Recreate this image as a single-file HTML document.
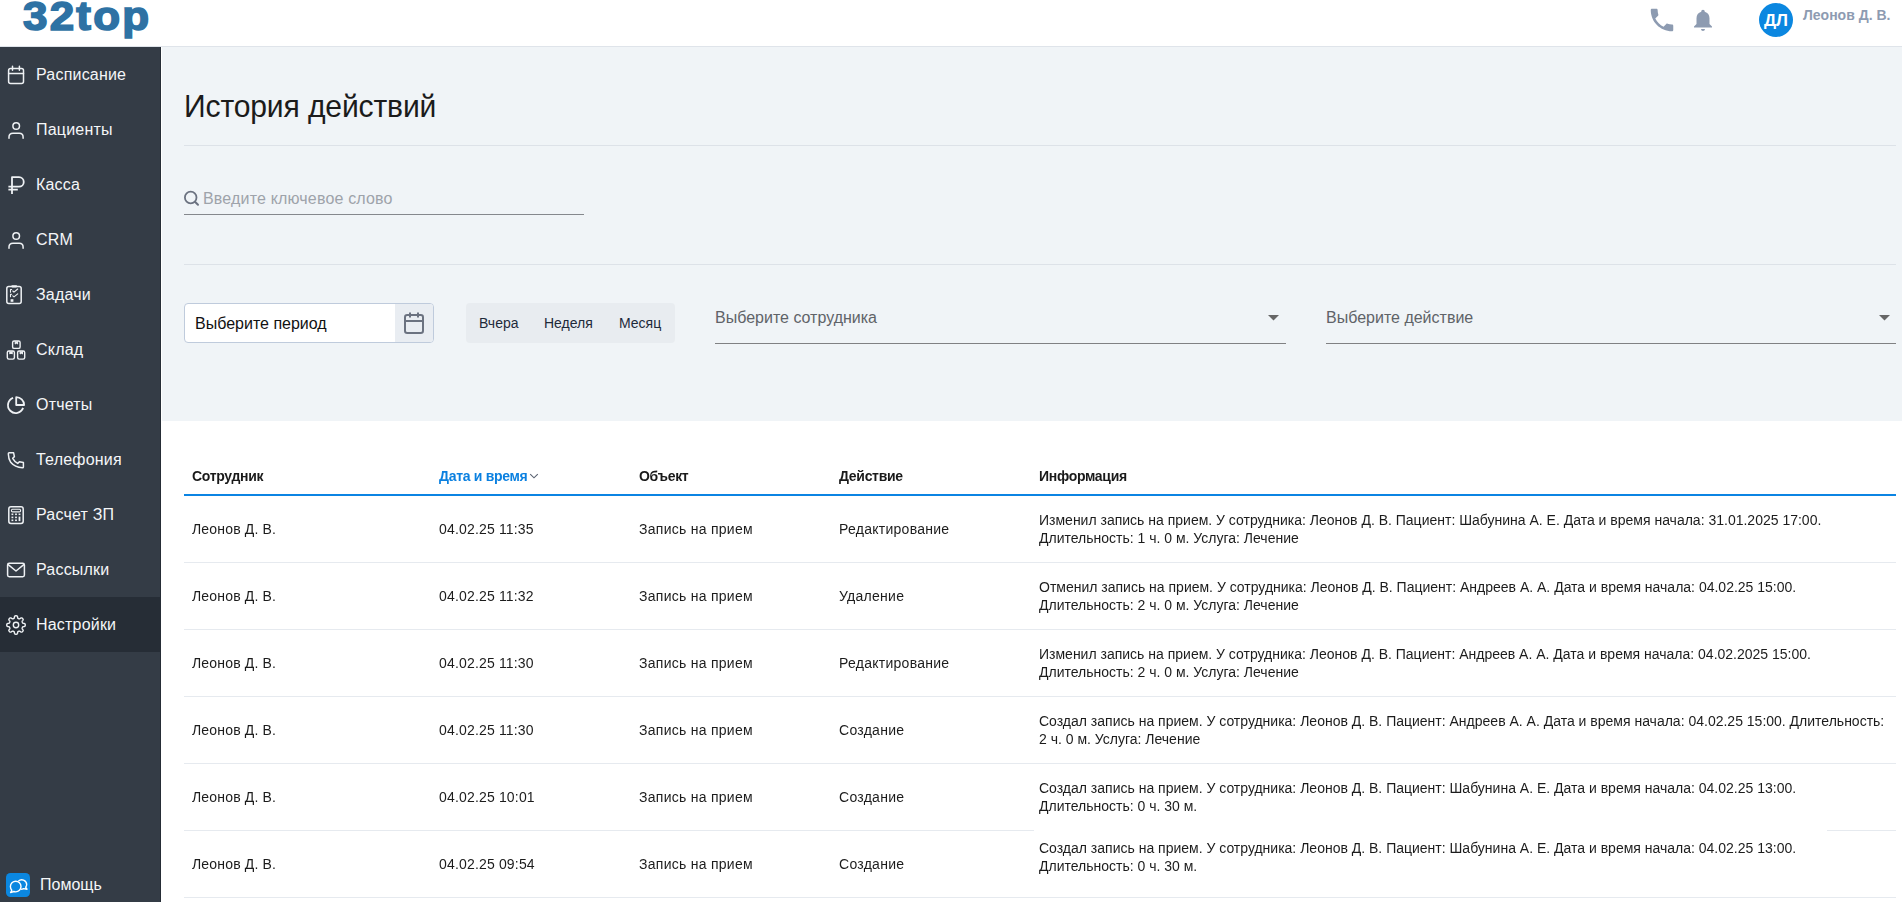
<!DOCTYPE html>
<html><head><meta charset="utf-8">
<style>
*{box-sizing:border-box;margin:0;padding:0}
html,body{width:1902px;height:902px;overflow:hidden;background:#fff;font-family:"Liberation Sans",sans-serif;color:#222}
#tbl{position:absolute;left:0;top:0;width:1902px;height:902px;will-change:transform}
.a{position:absolute;white-space:nowrap}
#hdr{position:absolute;left:0;top:0;width:1902px;height:47px;background:#fff;border-bottom:1px solid #dfe4ea}
#logo{position:absolute;left:23px;top:-5px;font-weight:bold;font-size:40px;line-height:42px;color:#2e72a4;letter-spacing:2px;-webkit-text-stroke:1.6px #2e72a4;transform-origin:0 0;transform:scaleX(1.1)}
#side{position:absolute;left:0;top:47px;width:161px;height:855px;background:#343c46;border-right:1px solid #262d36}
.mi{position:absolute;left:0;width:160px;height:55px;line-height:55px;color:#f4f6f8;font-size:16px;letter-spacing:0.2px}
.mi span{position:absolute;left:36px;top:0}
.mi svg{position:absolute;left:0;top:0}
.mi.act{background:#262d36}
#main{position:absolute;left:162px;top:47px;width:1740px;height:374px;background:#f0f4f7}
#title{position:absolute;left:184px;top:88px;font-size:32px;line-height:36px;letter-spacing:-0.15px;transform-origin:0 0;transform:scaleX(0.94);color:#1b1b1b}
.hl{position:absolute;height:1px;background:#dde2e8}
.t14{font-size:14px;line-height:18px;color:#1c1c1c}
.th{font-size:14px;line-height:18px;font-weight:bold;color:#1a1a1a;letter-spacing:-0.3px}
.rb{position:absolute;left:184px;width:1712px;height:1px;background:#e6eaef}
</style></head>
<body>
<div id="hdr"><div id="logo">32top</div>
  <!-- phone -->
  <svg class="a" style="left:1647px;top:5px" width="30" height="30" viewBox="0 0 24 24"><path fill="#8d9bb1" d="M6.62 10.79c1.44 2.83 3.76 5.14 6.59 6.59l2.2-2.2c.27-.27.67-.36 1.02-.24 1.12.37 2.33.57 3.57.57.55 0 1 .45 1 1V20c0 .55-.45 1-1 1-9.39 0-17-7.61-17-17 0-.55.45-1 1-1h3.5c.55 0 1 .45 1 1 0 1.25.2 2.45.57 3.57.11.35.03.74-.25 1.02l-2.2 2.2z" transform="rotate(0 12 12)"/></svg>
  <!-- bell -->
  <svg class="a" style="left:1690.4px;top:6px" width="26" height="28.2" viewBox="0 0 24 26"><path fill="#8d9bb1" d="M12 3.5c.9 0 1.6.7 1.6 1.5v.4c2.8.7 4.4 3.1 4.4 6v5.2l2.3 2.3v.9H3.7v-.9L6 16.6v-5.2c0-2.9 1.6-5.3 4.4-6V5c0-.8.7-1.5 1.6-1.5zM10.2 21.2h3.6c0 1-.8 1.8-1.8 1.8s-1.8-.8-1.8-1.8z"/></svg>
  <div class="a" style="left:1759px;top:3px;width:34px;height:34px;border-radius:50%;background:#0b87e0;color:#fff;font-weight:bold;font-size:17px;line-height:36px;text-align:center">ДЛ</div>
  <div class="a" style="left:1803px;top:6px;font-size:14px;line-height:18px;font-weight:bold;color:#8d9bb1">Леонов Д. В.</div>
</div>
<div id="side">
  <div class="mi" style="top:0"><span>Расписание</span></div>
  <div class="mi" style="top:55px"><span>Пациенты</span></div>
  <div class="mi" style="top:110px"><span>Касса</span></div>
  <div class="mi" style="top:165px"><span>CRM</span></div>
  <div class="mi" style="top:220px"><span>Задачи</span></div>
  <div class="mi" style="top:275px"><span>Склад</span></div>
  <div class="mi" style="top:330px"><span>Отчеты</span></div>
  <div class="mi" style="top:385px"><span>Телефония</span></div>
  <div class="mi" style="top:440px"><span>Расчет ЗП</span></div>
  <div class="mi" style="top:495px"><span>Рассылки</span></div>
  <div class="mi act" style="top:550px"><span>Настройки</span></div>
  <div class="a" style="left:40px;top:826px;font-size:16px;line-height:24px;color:#f4f6f8">Помощь</div>
</div>
<div id="main"></div>
<svg class="a" style="left:0;top:0" width="161" height="902" viewBox="0 0 161 902">
<g fill="none" stroke="#eef1f4" stroke-width="1.5" stroke-linecap="round" stroke-linejoin="round">
<!-- calendar -->
<rect x="8.6" y="68.4" width="14.9" height="15.1" rx="2"/>
<path d="M8.6 73.4H23.5M12.5 66.3V70.3M19.4 66.3V70.3"/>
<!-- person -->
<circle cx="16.2" cy="126" r="3.3"/>
<path d="M9 138.2V137Q9 133.2 13 133.2H19.3Q23.1 133.2 23.1 137V138.2"/>
<!-- ruble -->
<path d="M12 194V177.2H19A4.75 4.75 0 0 1 19 186.7H8.4M8.4 189.6H17.8" stroke-width="1.8" stroke-linecap="butt"/>
<!-- crm person -->
<circle cx="16.2" cy="236" r="3.3"/>
<path d="M9 248.2V247Q9 243.2 13 243.2H19.3Q23.1 243.2 23.1 247V248.2"/>
<!-- clipboard -->
<rect x="6.8" y="286.4" width="14.4" height="17" rx="2"/>
<path d="M12.3 286.3H16.1" stroke-width="2.2"/>
<path d="M11.6 289.5H10.5V292.2M12.8 291L14 292.2L17.7 289M11.6 294.2H10.5V296.8M12.8 295.8L14 296.9L17.7 293.8" stroke-width="1.1"/>
<rect x="10.6" y="299.2" width="2.8" height="2.6" fill="#eef1f4" stroke="none"/>
<!-- boxes -->
<rect x="12.6" y="341" width="7.5" height="7.4" rx="1.5" stroke-width="1.4"/>
<rect x="7.3" y="351" width="7.1" height="8.1" rx="1.5" stroke-width="1.4"/>
<rect x="17.6" y="351" width="7.1" height="8.1" rx="1.5" stroke-width="1.4"/>
<path d="M15.2 341.5V344L16.4 343.2L17.6 344V341.5M9.8 351.5V354L11 353.2L12.2 354V351.5M20.1 351.5V354L21.3 353.2L22.5 354V351.5" stroke-width="1" fill="#eef1f4"/>
<!-- pie -->
<path d="M13.1 397.9A7.8 7.8 0 1 0 23.1 407.9" stroke-width="1.8" stroke-linecap="butt"/>
<path d="M16.2 397.2V405H24.1A7.9 7.9 0 0 0 16.2 397.2Z" stroke-width="1.8"/>
<!-- phone -->
<path d="M9.2 452.8H13.6L14.4 456.6L12.7 458.3Q14.5 461.6 17.7 463.4L19.4 461.7L23.4 462.6V466.9Q23.4 467.7 22.5 467.7Q14.8 467.4 10.7 462.3Q8.4 458.8 8.3 453.7Q8.3 452.8 9.2 452.8Z"/>
<!-- calculator -->
<rect x="8.8" y="506.8" width="14.4" height="16.6" rx="2.2"/>
<rect x="11.4" y="509.3" width="9.2" height="2.6" rx="1.2" stroke-width="1.1"/>
<g fill="#eef1f4" stroke="none">
<rect x="11.5" y="513.5" width="1.8" height="1.6"/><rect x="15.1" y="513.5" width="1.8" height="1.6"/><rect x="18.6" y="513.5" width="1.8" height="1.6"/>
<rect x="11.5" y="516.6" width="1.8" height="1.6"/><rect x="15.1" y="516.6" width="1.8" height="1.6"/><rect x="18.6" y="516.6" width="1.8" height="4.5"/>
<rect x="11.5" y="519.5" width="1.8" height="1.6"/><rect x="15.1" y="519.5" width="1.8" height="1.6"/>
</g>
<!-- mail -->
<rect x="7.6" y="563.3" width="16.8" height="13.4" rx="1.6"/>
<path d="M8.2 564.6L16 571L23.8 564.6"/>
<!-- gear -->
<path d="M25.25 625.00 L25.24 625.24 L25.22 625.48 L25.18 625.72 L25.11 625.96 L24.96 626.18 L24.67 626.37 L24.19 626.52 L23.60 626.62 L23.12 626.71 L22.82 626.83 L22.66 626.97 L22.55 627.13 L22.47 627.29 L22.40 627.46 L22.33 627.62 L22.26 627.79 L22.19 627.95 L22.14 628.13 L22.10 628.31 L22.12 628.53 L22.24 628.83 L22.52 629.23 L22.86 629.72 L23.10 630.16 L23.17 630.50 L23.12 630.76 L23.00 630.98 L22.86 631.18 L22.71 631.37 L22.54 631.54 L22.37 631.71 L22.18 631.86 L21.98 632.00 L21.76 632.12 L21.50 632.17 L21.16 632.10 L20.72 631.86 L20.23 631.52 L19.83 631.24 L19.53 631.12 L19.31 631.10 L19.13 631.14 L18.95 631.19 L18.79 631.26 L18.62 631.33 L18.46 631.40 L18.29 631.47 L18.13 631.55 L17.97 631.66 L17.83 631.82 L17.71 632.12 L17.62 632.60 L17.52 633.19 L17.37 633.67 L17.18 633.96 L16.96 634.11 L16.72 634.18 L16.48 634.22 L16.24 634.24 L16.00 634.25 L15.76 634.24 L15.52 634.22 L15.28 634.18 L15.04 634.11 L14.82 633.96 L14.63 633.67 L14.48 633.19 L14.38 632.60 L14.29 632.12 L14.17 631.82 L14.03 631.66 L13.87 631.55 L13.71 631.47 L13.54 631.40 L13.38 631.33 L13.21 631.26 L13.05 631.19 L12.87 631.14 L12.69 631.10 L12.47 631.12 L12.17 631.24 L11.77 631.52 L11.28 631.86 L10.84 632.10 L10.50 632.17 L10.24 632.12 L10.02 632.00 L9.82 631.86 L9.63 631.71 L9.46 631.54 L9.29 631.37 L9.14 631.18 L9.00 630.98 L8.88 630.76 L8.83 630.50 L8.90 630.16 L9.14 629.72 L9.48 629.23 L9.76 628.83 L9.88 628.53 L9.90 628.31 L9.86 628.13 L9.81 627.95 L9.74 627.79 L9.67 627.62 L9.60 627.46 L9.53 627.29 L9.45 627.13 L9.34 626.97 L9.18 626.83 L8.88 626.71 L8.40 626.62 L7.81 626.52 L7.33 626.37 L7.04 626.18 L6.89 625.96 L6.82 625.72 L6.78 625.48 L6.76 625.24 L6.75 625.00 L6.76 624.76 L6.78 624.52 L6.82 624.28 L6.89 624.04 L7.04 623.82 L7.33 623.63 L7.81 623.48 L8.40 623.38 L8.88 623.29 L9.18 623.17 L9.34 623.03 L9.45 622.87 L9.53 622.71 L9.60 622.54 L9.67 622.38 L9.74 622.21 L9.81 622.05 L9.86 621.87 L9.90 621.69 L9.88 621.47 L9.76 621.17 L9.48 620.77 L9.14 620.28 L8.90 619.84 L8.83 619.50 L8.88 619.24 L9.00 619.02 L9.14 618.82 L9.29 618.63 L9.46 618.46 L9.63 618.29 L9.82 618.14 L10.02 618.00 L10.24 617.88 L10.50 617.83 L10.84 617.90 L11.28 618.14 L11.77 618.48 L12.17 618.76 L12.47 618.88 L12.69 618.90 L12.87 618.86 L13.05 618.81 L13.21 618.74 L13.38 618.67 L13.54 618.60 L13.71 618.53 L13.87 618.45 L14.03 618.34 L14.17 618.18 L14.29 617.88 L14.38 617.40 L14.48 616.81 L14.63 616.33 L14.82 616.04 L15.04 615.89 L15.28 615.82 L15.52 615.78 L15.76 615.76 L16.00 615.75 L16.24 615.76 L16.48 615.78 L16.72 615.82 L16.96 615.89 L17.18 616.04 L17.37 616.33 L17.52 616.81 L17.62 617.40 L17.71 617.88 L17.83 618.18 L17.97 618.34 L18.13 618.45 L18.29 618.53 L18.46 618.60 L18.62 618.67 L18.79 618.74 L18.95 618.81 L19.13 618.86 L19.31 618.90 L19.53 618.88 L19.83 618.76 L20.23 618.48 L20.72 618.14 L21.16 617.90 L21.50 617.83 L21.76 617.88 L21.98 618.00 L22.18 618.14 L22.37 618.29 L22.54 618.46 L22.71 618.63 L22.86 618.82 L23.00 619.02 L23.12 619.24 L23.17 619.50 L23.10 619.84 L22.86 620.28 L22.52 620.77 L22.24 621.17 L22.12 621.47 L22.10 621.69 L22.14 621.87 L22.19 622.05 L22.26 622.21 L22.33 622.38 L22.40 622.54 L22.47 622.71 L22.55 622.87 L22.66 623.03 L22.82 623.17 L23.12 623.29 L23.60 623.38 L24.19 623.48 L24.67 623.63 L24.96 623.82 L25.11 624.04 L25.18 624.28 L25.22 624.52 L25.24 624.76Z" stroke-width="1.4"/>
<circle cx="16" cy="625" r="2.7" stroke-width="1.4"/>
</g>
<!-- help -->
<rect x="6" y="873" width="24" height="24" rx="4.5" fill="#0b87e0"/>
<g fill="none" stroke="#fff" stroke-width="1.4" stroke-linejoin="round">
<path d="M18.3 881.3A4.9 4.9 0 0 1 26.7 884.5Q26.6 886.3 25.6 887.2L27 889.2L23.6 888.6Q22.4 889.3 20.9 889.4"/>
<path d="M10.6 892.6L11.8 890.3Q10.4 888.7 10.4 886.6A5.3 5.3 0 1 1 15.7 891.9Q14.6 891.9 13.8 891.5Z"/>
</g>
</svg>
<div id="title">История действий</div>
<div class="hl" style="left:184px;top:145px;width:1712px"></div>

<!-- search -->
<svg class="a" style="left:183px;top:190px" width="17" height="17" viewBox="0 0 17 17"><circle cx="7.7" cy="7.5" r="5.8" fill="none" stroke="#6b7280" stroke-width="1.8"/><path d="M12.2 12l2.8 2.8" stroke="#6b7280" stroke-width="2" stroke-linecap="round"/></svg>
<div class="a" style="left:203px;top:190px;font-size:16px;line-height:18px;color:#9ea3aa;letter-spacing:0.17px">Введите ключевое слово</div>
<div class="a" style="left:184px;top:214px;width:400px;height:1px;background:#85888d"></div>
<div class="hl" style="left:184px;top:264px;width:1712px"></div>

<!-- period -->
<div class="a" style="left:184px;top:303px;width:250px;height:40px;border:1px solid #bfcbdc;border-radius:4px;background:#fff;overflow:hidden">
  <div class="a" style="left:210px;top:0;width:39px;height:38px;background:#e9edf2"></div>
  <svg class="a" style="left:218px;top:7px" width="22" height="24" viewBox="0 0 22 24"><rect x="2" y="4" width="18" height="18" rx="2.2" fill="none" stroke="#6b7280" stroke-width="2"/><path d="M2 10h18M7 1.5v5M15 1.5v5" stroke="#6b7280" stroke-width="2"/></svg>
  <div class="a" style="left:10px;top:11px;font-size:16px;line-height:18px;color:#111">Выберите период</div>
</div>
<div class="a" style="left:466px;top:303px;width:209px;height:40px;border-radius:4px;background:#e8ecf0">
  <div class="a" style="left:13px;top:11px;font-size:14px;line-height:18px;color:#1e2a3a">Вчера</div>
  <div class="a" style="left:78px;top:11px;font-size:14px;line-height:18px;color:#1e2a3a">Неделя</div>
  <div class="a" style="left:153px;top:11px;font-size:14px;line-height:18px;color:#1e2a3a">Месяц</div>
</div>
<div class="a" style="left:715px;top:309px;font-size:16px;line-height:18px;color:#5f6368">Выберите сотрудника</div>
<svg class="a" style="left:1268px;top:315px" width="11" height="6" viewBox="0 0 11 6"><path d="M0 0h11L5.5 5.5z" fill="#666"/></svg>
<div class="a" style="left:715px;top:343px;width:571px;height:1px;background:#808183"></div>
<div class="a" style="left:1326px;top:309px;font-size:16px;line-height:18px;color:#5f6368">Выберите действие</div>
<svg class="a" style="left:1879px;top:315px" width="11" height="6" viewBox="0 0 11 6"><path d="M0 0h11L5.5 5.5z" fill="#666"/></svg>
<div class="a" style="left:1326px;top:343px;width:570px;height:1px;background:#808183"></div>

<div id="tbl">
<!-- table -->
<div class="a th" style="left:192px;top:467px">Сотрудник</div>
<div class="a th" style="left:439px;top:467px;color:#0b80e0">Дата и время</div>
<svg class="a" style="left:529px;top:473px" width="10" height="6" viewBox="0 0 10 6"><path d="M1.2 1.2l3.8 3.6 3.8-3.6" fill="none" stroke="#5b6372" stroke-width="1.15"/></svg>
<div class="a th" style="left:639px;top:467px">Объект</div>
<div class="a th" style="left:839px;top:467px">Действие</div>
<div class="a th" style="left:1039px;top:467px">Информация</div>
<div class="a" style="left:184px;top:494px;width:1712px;height:2px;background:#0b84e3"></div>

<div class="a t14" style="left:192px;top:520px;letter-spacing:0.17px">Леонов Д. В.</div>
<div class="a t14" style="left:439px;top:520px;letter-spacing:0.17px">04.02.25 11:35</div>
<div class="a t14" style="left:639px;top:520px;letter-spacing:0.27px">Запись на прием</div>
<div class="a t14" style="left:839px;top:520px;letter-spacing:0.27px">Редактирование</div>
<div class="a t14" style="left:1039px;top:511px">Изменил запись на прием. У сотрудника: Леонов Д. В. Пациент: Шабунина А. Е. Дата и время начала: 31.01.2025 17:00.<br>Длительность: 1 ч. 0 м. Услуга: Лечение</div>
<div class="rb" style="top:562px"></div>
<div class="a t14" style="left:192px;top:587px;letter-spacing:0.17px">Леонов Д. В.</div>
<div class="a t14" style="left:439px;top:587px;letter-spacing:0.17px">04.02.25 11:32</div>
<div class="a t14" style="left:639px;top:587px;letter-spacing:0.27px">Запись на прием</div>
<div class="a t14" style="left:839px;top:587px;letter-spacing:0.27px">Удаление</div>
<div class="a t14" style="left:1039px;top:578px">Отменил запись на прием. У сотрудника: Леонов Д. В. Пациент: Андреев А. А. Дата и время начала: 04.02.25 15:00.<br>Длительность: 2 ч. 0 м. Услуга: Лечение</div>
<div class="rb" style="top:629px"></div>
<div class="a t14" style="left:192px;top:654px;letter-spacing:0.17px">Леонов Д. В.</div>
<div class="a t14" style="left:439px;top:654px;letter-spacing:0.17px">04.02.25 11:30</div>
<div class="a t14" style="left:639px;top:654px;letter-spacing:0.27px">Запись на прием</div>
<div class="a t14" style="left:839px;top:654px;letter-spacing:0.27px">Редактирование</div>
<div class="a t14" style="left:1039px;top:645px">Изменил запись на прием. У сотрудника: Леонов Д. В. Пациент: Андреев А. А. Дата и время начала: 04.02.2025 15:00.<br>Длительность: 2 ч. 0 м. Услуга: Лечение</div>
<div class="rb" style="top:696px"></div>
<div class="a t14" style="left:192px;top:721px;letter-spacing:0.17px">Леонов Д. В.</div>
<div class="a t14" style="left:439px;top:721px;letter-spacing:0.17px">04.02.25 11:30</div>
<div class="a t14" style="left:639px;top:721px;letter-spacing:0.27px">Запись на прием</div>
<div class="a t14" style="left:839px;top:721px;letter-spacing:0.27px">Создание</div>
<div class="a t14" style="left:1039px;top:712px">Создал запись на прием. У сотрудника: Леонов Д. В. Пациент: Андреев А. А. Дата и время начала: 04.02.25 15:00. Длительность:<br>2 ч. 0 м. Услуга: Лечение</div>
<div class="rb" style="top:763px"></div>
<div class="a t14" style="left:192px;top:788px;letter-spacing:0.17px">Леонов Д. В.</div>
<div class="a t14" style="left:439px;top:788px;letter-spacing:0.17px">04.02.25 10:01</div>
<div class="a t14" style="left:639px;top:788px;letter-spacing:0.27px">Запись на прием</div>
<div class="a t14" style="left:839px;top:788px;letter-spacing:0.27px">Создание</div>
<div class="a t14" style="left:1039px;top:779px">Создал запись на прием. У сотрудника: Леонов Д. В. Пациент: Шабунина А. Е. Дата и время начала: 04.02.25 13:00.<br>Длительность: 0 ч. 30 м.</div>
<div class="rb" style="top:830px"></div>
<div class="a t14" style="left:192px;top:855px;letter-spacing:0.17px">Леонов Д. В.</div>
<div class="a t14" style="left:439px;top:855px;letter-spacing:0.17px">04.02.25 09:54</div>
<div class="a t14" style="left:639px;top:855px;letter-spacing:0.27px">Запись на прием</div>
<div class="a t14" style="left:839px;top:855px;letter-spacing:0.27px">Создание</div>
<div class="a" style="left:1034px;top:825px;width:793px;height:60px;background:#fff"></div>
<div class="a t14" style="left:1039px;top:839px">Создал запись на прием. У сотрудника: Леонов Д. В. Пациент: Шабунина А. Е. Дата и время начала: 04.02.25 13:00.<br>Длительность: 0 ч. 30 м.</div>
<div class="rb" style="top:897px"></div>
</div></body></html>
